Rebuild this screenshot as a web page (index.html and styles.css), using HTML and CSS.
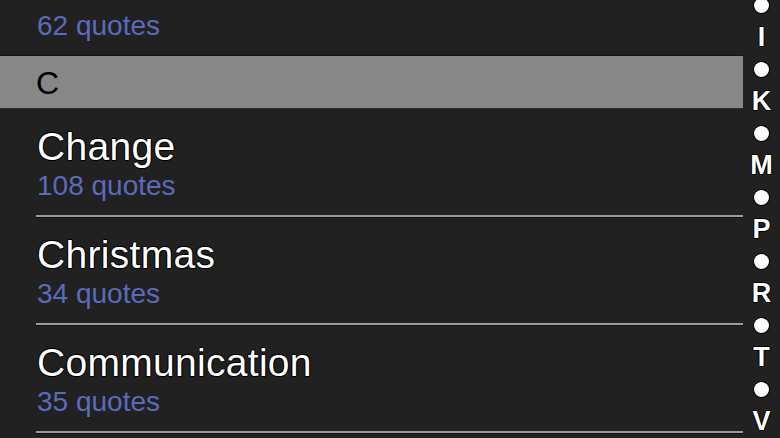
FILE: index.html
```html
<!DOCTYPE html>
<html>
<head>
<meta charset="utf-8">
<link rel="stylesheet" href="styles.css">
</head>
<body>
<div class="screen">
  <div class="list">
    <div class="row partial">
      <div class="count">62 quotes</div>
    </div>
    <div class="section">C</div>
    <div class="row">
      <div class="title">Change</div>
      <div class="count">108 quotes</div>
    </div>
    <div class="row">
      <div class="title">Christmas</div>
      <div class="count">34 quotes</div>
    </div>
    <div class="row">
      <div class="title">Communication</div>
      <div class="count">35 quotes</div>
    </div>
  </div>
  <div class="index">
    <span class="dot"></span>
    <span class="letter">I</span>
    <span class="dot"></span>
    <span class="letter">K</span>
    <span class="dot"></span>
    <span class="letter">M</span>
    <span class="dot"></span>
    <span class="letter">P</span>
    <span class="dot"></span>
    <span class="letter">R</span>
    <span class="dot"></span>
    <span class="letter">T</span>
    <span class="dot"></span>
    <span class="letter">V</span>
  </div>
</div>
</body>
</html>
```
FILE: styles.css
```css
html, body {
  margin: 0;
  padding: 0;
  background: #212121;
  width: 780px;
  height: 438px;
  overflow: hidden;
  font-family: "Liberation Sans", Arial, sans-serif;
}

.screen {
  display: flex;
  height: 438px;
  overflow: hidden;
}

.list {
  flex: 1;
}

.row {
  display: flex;
  flex-direction: column;
  padding-top: 15px;
}

.row::after {
  content: "";
  display: block;
  margin-top: 13px;
  margin-left: 36px;
  height: 2px;
  background: #9c9c9c;
  box-shadow: 0 1px 0 #111;
}

.row.partial {
  padding-top: 10px;
}

.row.partial::after {
  background: transparent;
  box-shadow: none;
  height: 0;
  margin-top: 13px;
}

.title {
  padding-left: 37px;
  font-size: 39px;
  letter-spacing: 0.3px;
  line-height: 46px;
  height: 46px;
  color: #fff;
  text-shadow: -1px 0 0 #000, 1px 0 0 #000, 0 -1px 0 #000, 0 1px 0 #000, 0 0 2px #000;
}

.count {
  padding-left: 37px;
  font-size: 28px;
  line-height: 32px;
  height: 32px;
  color: #5a6bbb;
}

.section {
  border-top: 1px solid #141414;
  border-bottom: 1px solid #2c2c2c;
  background: #878787;
  height: 52px;
  line-height: 54px;
  padding-left: 36px;
  font-size: 32px;
  color: #000;
}

.index {
  width: 37px;
  display: flex;
  flex-direction: column;
  align-items: center;
  margin-top: -11px;
}

.dot, .letter {
  height: 32px;
  display: flex;
  align-items: center;
  justify-content: center;
}

.dot::before {
  content: "";
  width: 15px;
  height: 15px;
  border-radius: 50%;
  background: #fff;
  box-shadow: 0 0 0 1px #000;
}

.letter {
  font-size: 27px;
  font-weight: bold;
  color: #fff;
  text-shadow: -1px 0 0 #000, 1px 0 0 #000, 0 -1px 0 #000, 0 1px 0 #000;
}
```
